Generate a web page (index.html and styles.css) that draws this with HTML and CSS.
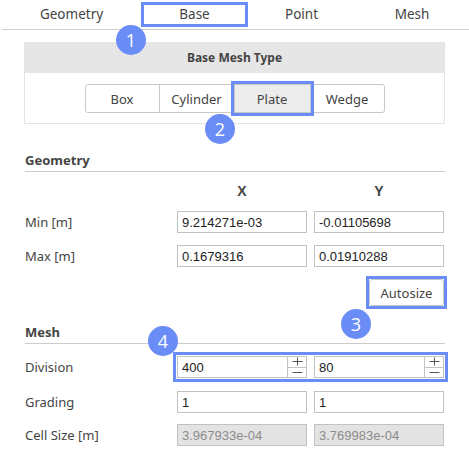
FILE: index.html
```html
<!DOCTYPE html>
<html>
<head>
<meta charset="utf-8">
<link rel="stylesheet" href="styles.css">
</head>
<body>
<div class="page">
  <nav class="tabs">
    <div class="tab">Geometry</div>
    <div class="tab"><span class="tab-hl">Base</span></div>
    <div class="tab">Point</div>
    <div class="tab">Mesh</div>
  </nav>

  <section class="panel">
    <div class="panel-head">Base Mesh Type</div>
    <div class="panel-body">
      <div class="seg">
        <button class="seg-btn">Box</button>
        <button class="seg-btn">Cylinder</button>
        <button class="seg-btn active hl">Plate</button>
        <button class="seg-btn">Wedge</button>
      </div>
    </div>
  </section>

  <section class="group geo">
    <h2 class="group-title">Geometry</h2>
    <div class="row head-row">
      <span></span>
      <span class="col-h">X</span>
      <span class="col-h">Y</span>
    </div>
    <div class="row r-min">
      <span class="label">Min [m]</span>
      <input class="field" value="9.214271e-03">
      <input class="field" value="-0.01105698">
    </div>
    <div class="row r-max">
      <span class="label">Max [m]</span>
      <input class="field" value="0.1679316">
      <input class="field" value="0.01910288">
    </div>
    <div class="actions">
      <button class="btn hl">Autosize</button>
    </div>
  </section>

  <section class="group mesh">
    <h2 class="group-title">Mesh</h2>
    <div class="row r-div">
      <span class="label">Division</span>
      <div class="pair hl">
        <div class="spin"><input class="spin-input" value="400"><div class="spin-btns">
          <span class="sb"><svg class="ico" viewBox="0 0 11 9"><path d="M0.5 4.5H10.5M5.5 0.5V8.5"/></svg></span>
          <span class="sb"><svg class="ico" viewBox="0 0 11 9"><path d="M0.5 4.5H10.5"/></svg></span>
        </div></div>
        <div class="spin"><input class="spin-input" value="80"><div class="spin-btns">
          <span class="sb"><svg class="ico" viewBox="0 0 11 9"><path d="M0.5 4.5H10.5M5.5 0.5V8.5"/></svg></span>
          <span class="sb"><svg class="ico" viewBox="0 0 11 9"><path d="M0.5 4.5H10.5"/></svg></span>
        </div></div>
      </div>
    </div>
    <div class="row r-grad">
      <span class="label">Grading</span>
      <input class="field" value="1">
      <input class="field" value="1">
    </div>
    <div class="row r-cell">
      <span class="label">Cell Size [m]</span>
      <input class="field disabled" value="3.967933e-04" disabled>
      <input class="field disabled" value="3.769983e-04" disabled>
    </div>
  </section>

  <span class="badge b1">1</span>
  <span class="badge b2">2</span>
  <span class="badge b3">3</span>
  <span class="badge b4">4</span>
</div>
</body>
</html>
```

FILE: styles.css
```css
* { box-sizing: border-box; }
html, body { margin: 0; padding: 0; background: #fff; }
body {
  font-family: "Noto Sans", "Open Sans", sans-serif;
  color: #444;
  font-size: 13px;
}
.page {
  position: relative;
  width: 469px;
  height: 465px;
  overflow: hidden;
}

/* tabs */
.tabs {
  display: grid;
  grid-template-columns: 139px 107px 107px 1fr;
  height: 30px;
  margin-left: 2px;
  border-bottom: 1px solid #cfcfcf;
}
.tab {
  text-align: center;
  font-size: 13.5px;
  line-height: 29px;
  color: #444;
}
.tab-hl {
  display: block;
  margin-top: 2px;
  height: 25px;
  line-height: 19px;
  border: 3px solid #6a8cf6;
}

/* panel */
.panel {
  margin: 12px 24px 0 24px;
  border: 1px solid #e3e3e3;
  border-top: none;
}
.panel-head {
  background: #e6e6e6;
  height: 31px;
  line-height: 31px;
  text-align: center;
  font-weight: bold;
  font-size: 12px;
  color: #444;
}
.panel-body {
  display: flex;
  justify-content: center;
  padding: 11px 0 10px;
}
.seg {
  display: flex;
  border: 1px solid #c8c8c8;
  border-radius: 3px;
  height: 29px;
}
.seg-btn {
  width: 75px;
  height: 27px;
  border: none;
  border-left: 1px solid #c8c8c8;
  background: #fff;
  font-family: inherit;
  font-size: 13px;
  color: #444;
  padding: 0;
}
.seg-btn:first-child { border-left: none; width: 73px; border-radius: 3px 0 0 3px; }
.seg-btn:last-child { border-radius: 0 3px 3px 0; width: 74px; }
.seg-btn.active { background: #ececec; width: 76px; }

.hl { position: relative; }
.hl::after {
  content: "";
  position: absolute;
  left: -4px; right: -4px; top: -4px; bottom: -4px;
  border: 3px solid #6a8cf6;
  pointer-events: none;
}

/* groups */
.group {
  margin: 0 24px 0 25px;
}
.geo { margin-top: 26px; }
.mesh { margin-top: 16px; }
.group-title {
  margin: 0;
  font-size: 13px;
  font-weight: bold;
  line-height: 20px;
  padding-bottom: 1px;
  border-bottom: 1px solid #cccccc;
  color: #444;
}
.row {
  display: grid;
  grid-template-columns: 145px 130px 130px;
  column-gap: 7px;
  align-items: center;
}
.head-row { margin-top: 9px; height: 20px; }
.col-h {
  text-align: center;
  font-weight: bold;
  font-size: 14px;
  color: #444;
  font-family: "Liberation Sans", Arial, sans-serif;
}
.r-min { margin-top: 10px; }
.r-max { margin-top: 12px; }
.label { font-size: 13px; color: #444; }

.field {
  height: 22px;
  width: 130px;
  border: 1px solid #c2c2c2;
  padding: 0 0 0 4px;
  font-family: "Liberation Sans", Arial, sans-serif;
  font-size: 13px;
  color: #222;
  background: #fff;
  outline: none;
  margin: 0;
}
.field.disabled {
  background: #e3e3e3;
  color: #8c8c8c;
  -webkit-text-fill-color: #8c8c8c;
  opacity: 1;
}

.actions {
  display: flex;
  justify-content: flex-end;
  margin-top: 12px;
  margin-right: 1px;
}
.btn {
  width: 75px;
  height: 27px;
  border: 1px solid #c8c8c8;
  border-radius: 3px;
  background: #fff;
  font-family: inherit;
  font-size: 13px;
  color: #444;
  padding: 0;
}

/* mesh */
.r-div { margin-top: 12px; }
.pair {
  grid-column: 2 / 4;
  display: flex;
  gap: 7px;
}
.spin {
  display: flex;
  width: 130px;
  height: 22px;
  border: 1px solid #c2c2c2;
  background: #fff;
}
.spin-input {
  flex: 1;
  min-width: 0;
  border: none;
  outline: none;
  padding: 0 0 0 4px;
  height: 20px;
  font-family: "Liberation Sans", Arial, sans-serif;
  font-size: 13px;
  color: #222;
  margin: 0;
}
.spin-btns {
  width: 19px;
  display: flex;
  flex-direction: column;
  border-left: 1px solid #c2c2c2;
}
.sb {
  flex: 1;
  display: flex;
  align-items: center;
  justify-content: center;
  overflow: hidden;
}
.sb + .sb { border-top: 1px solid #c2c2c2; }
.ico {
  display: block;
  width: 11px;
  height: 9px;
  fill: none;
  stroke: #555;
  stroke-width: 1;
}
.r-grad { margin-top: 13px; }
.r-cell { margin-top: 11px; }

/* badges */
.badge {
  position: absolute;
  width: 30px;
  height: 30px;
  border-radius: 50%;
  background: #6a8cf6;
  color: #fff;
  font-family: "Open Sans", "Noto Sans", sans-serif;
  font-size: 18px;
  line-height: 30px;
  text-align: center;
}
.b1 { left: 116px; top: 25px; }
.b2 { left: 205px; top: 114px; }
.b3 { left: 341px; top: 309px; }
.b4 { left: 148px; top: 326px; }
```
